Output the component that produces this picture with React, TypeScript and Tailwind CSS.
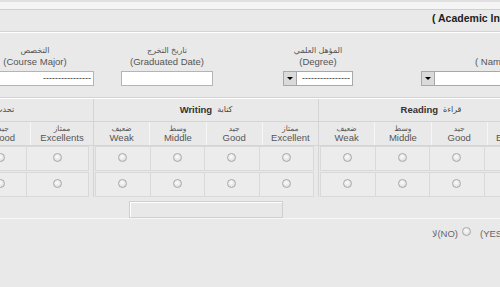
import React from 'react'

interface GroupProps {
  en: string
  ar: string
  last: string
  wideLast?: boolean
}

function Radio() {
  return (
    <span className="block w-[9px] h-[9px] rounded-full border border-[#a9a9a9] bg-[radial-gradient(circle_at_45%_40%,#fdfdfd,#d3d3d3)]" />
  )
}

function Select({ width, text }: { width: string; text?: string }) {
  return (
    <div className={`${width} h-[15px] flex border border-[#a8a8a8] bg-white`}>
      <div className="w-[13px] h-full bg-[#dadada] border-r border-[#a8a8a8] flex items-center justify-center">
        <span className="block w-0 h-0 border-l-[3px] border-r-[3px] border-t-[3px] border-l-transparent border-r-transparent border-t-black" />
      </div>
      <div className="flex-1 flex items-center justify-end pr-[2px] text-[9px] leading-none text-[#333]">
        {text}
      </div>
    </div>
  )
}

function Group({ en, ar, last, wideLast }: GroupProps) {
  const cols = [
    { ar: 'ضعيف', en: 'Weak' },
    { ar: 'وسط', en: 'Middle' },
    { ar: 'جيد', en: 'Good' },
    { ar: 'ممتاز', en: last },
  ]
  // the first group's last column is a bit wider than the others
  const colClass = (i: number) =>
    wideLast ? (i === 3 ? 'w-[62px] shrink-0' : 'flex-1') : 'flex-1'

  return (
    <div className="w-[225px] shrink-0 border-r border-[#d4d4d4]">
      <div className="h-[23px] flex items-center justify-center gap-[5px] border-b border-[#d4d4d4]">
        <span className="text-[9.5px] font-bold text-[#333]">{en}</span>
        <span className="text-[8px] text-[#444]">{ar}</span>
      </div>
      <div className="flex h-[24px] border-b border-[#d4d4d4]">
        {cols.map((c, i) => (
          <div
            key={i}
            className={`${colClass(i)} flex flex-col items-center justify-center border-r border-[#f6f6f6] last:border-r-0 leading-none`}
          >
            <span className="text-[7.5px] text-[#555]">{c.ar}</span>
            <span className="text-[9.5px] text-[#555] mt-[1px]">{c.en}</span>
          </div>
        ))}
      </div>
      <div className="pl-[1px] pr-[4px] flex flex-col gap-[1px]">
        {[0, 1].map((r) => (
          <div key={r} className="flex">
            {cols.map((_, i) => (
              <div
                key={i}
                className={`${colClass(i)} h-[25px] flex items-center justify-center pb-[2px] bg-[#ececec] border-y border-r border-[#d9d9d9] first:border-l`}
              >
                <Radio />
              </div>
            ))}
          </div>
        ))}
      </div>
    </div>
  )
}

export default function App() {
  return (
    <div className="w-[500px] h-[287px] overflow-hidden bg-[#e9e9e9] text-[#555] font-['Liberation_Sans','DejaVu_Sans',sans-serif]">
      {/* top band */}
      <div className="h-[10px] border-t-[2px] border-t-[#e0e0e0] bg-[#f4f4f4] border-b border-b-[#cfcfcf]" />

      {/* title */}
      <div className="h-[22px] flex items-center pl-[432px] pb-[3px] whitespace-nowrap text-[10.5px] font-bold text-[#222] border-b border-[#d3d3d3]">
        ( Academic Information ) المعلومات الأكاديمية
      </div>

      {/* form row */}
      <div className="h-[66px] border-t border-white border-b border-b-[#d3d3d3] overflow-hidden">
        <div className="flex ml-[-45px] pt-[12px] whitespace-nowrap">
          <div className="w-[160px] shrink-0 flex flex-col items-center">
            <span className="h-[11px] leading-[11px] text-[8px]">التخصص</span>
            <span className="h-[12px] leading-[12px] text-[9.5px]">(Course Major)</span>
            <div className="mt-[3px] w-[118px] h-[15px] border border-[#b4b4b4] bg-white flex items-center justify-end pr-[2px] text-[9px] leading-none text-[#333]">
              ----------------
            </div>
          </div>
          <div className="w-[104px] shrink-0 flex flex-col items-center">
            <span className="h-[11px] leading-[11px] text-[8px]">تاريخ التخرج</span>
            <span className="h-[12px] leading-[12px] text-[9.5px]">(Graduated Date)</span>
            <div className="mt-[3px] w-[92px] h-[15px] border border-[#b4b4b4] bg-white" />
          </div>
          <div className="w-[198px] shrink-0 flex flex-col items-center">
            <span className="h-[11px] leading-[11px] text-[8px]">المؤهل العلمي</span>
            <span className="h-[12px] leading-[12px] text-[9.5px]">(Degree)</span>
            <div className="mt-[3px]">
              <Select width="w-[70px]" text="----------------" />
            </div>
          </div>
          <div className="w-[200px] shrink-0 flex flex-col items-start pl-[4px]">
            <span className="h-[11px]" />
            <span className="h-[12px] leading-[12px] text-[9.5px] pl-[54px]">( Name ) الاسم</span>
            <div className="mt-[3px]">
              <Select width="w-[140px]" />
            </div>
          </div>
        </div>
      </div>

      {/* skills table */}
      <div className="border-t border-white overflow-hidden">
        <div className="flex ml-[-131px] whitespace-nowrap">
          <Group en="Speaking" ar="تحدث" last="Excellents" wideLast />
          <Group en="Writing" ar="كتابة" last="Excellent" />
          <Group en="Reading" ar="قراءة" last="Excellent" />
        </div>
      </div>

      {/* note box */}
      <div className="h-[22px] pt-[4px] border-b border-[#f6f6f6]">
        <div className="ml-[129px] w-[154px] h-[17px] border border-[#cfcfcf] bg-[#e8e8e8] shadow-[inset_1px_1px_0_#ffffff]" />
      </div>

      {/* yes / no */}
      <div className="flex items-start pl-[432px] pt-[9px] gap-[4px] whitespace-nowrap text-[9.5px] leading-[12px] text-[#666]">
        <span>لا(NO)</span>
        <span className="mt-[-1px]">
          <Radio />
        </span>
        <span className="ml-[5px]">(YES) نعم</span>
      </div>
    </div>
  )
}
